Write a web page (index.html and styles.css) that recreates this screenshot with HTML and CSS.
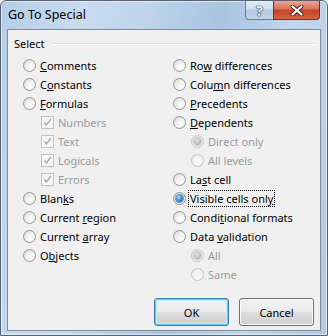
FILE: index.html
```html
<!DOCTYPE html>
<html lang="en">
<head>
  <meta charset="UTF-8">
  <title>Go To Special</title>
  <link rel="stylesheet" href="styles.css">
</head>
<body>
  <div class="window">
    <div class="titlebar">
      <span class="title">Go To Special</span>
      <div class="caption-buttons">
        <div class="cap-btn help">?</div>
        <div class="cap-btn close">
          <svg width="14" height="11" viewBox="0 0 14 11">
            <path d="M2.5 1.5 L11.5 9.5 M11.5 1.5 L2.5 9.5" stroke="#4a2018" stroke-width="4" stroke-linecap="round"/>
            <path d="M2.5 1.5 L11.5 9.5 M11.5 1.5 L2.5 9.5" stroke="#ffffff" stroke-width="2.2" stroke-linecap="round"/>
          </svg>
        </div>
      </div>
    </div>

    <div class="client">
      <div class="group-head">
        <span>Select</span>
        <div class="group-line"></div>
      </div>

      <div class="columns">
        <div class="col">
          <div class="opt"><span class="radio"></span><span><u>C</u>omments</span></div>
          <div class="opt"><span class="radio"></span><span>C<u>o</u>nstants</span></div>
          <div class="opt"><span class="radio"></span><span><u>F</u>ormulas</span></div>
          <div class="opt sub off"><span class="check"><svg width="11" height="11" viewBox="0 0 11 11"><path d="M2.5 5.5 L4.5 8 L8.8 2" fill="none" stroke="#a9a9a9" stroke-width="1.3"/></svg></span><span>Numbers</span></div>
          <div class="opt sub off"><span class="check"><svg width="11" height="11" viewBox="0 0 11 11"><path d="M2.5 5.5 L4.5 8 L8.8 2" fill="none" stroke="#a9a9a9" stroke-width="1.3"/></svg></span><span>Text</span></div>
          <div class="opt sub off"><span class="check"><svg width="11" height="11" viewBox="0 0 11 11"><path d="M2.5 5.5 L4.5 8 L8.8 2" fill="none" stroke="#a9a9a9" stroke-width="1.3"/></svg></span><span>Logicals</span></div>
          <div class="opt sub off"><span class="check"><svg width="11" height="11" viewBox="0 0 11 11"><path d="M2.5 5.5 L4.5 8 L8.8 2" fill="none" stroke="#a9a9a9" stroke-width="1.3"/></svg></span><span>Errors</span></div>
          <div class="opt"><span class="radio"></span><span>Blan<u>k</u>s</span></div>
          <div class="opt"><span class="radio"></span><span>Current <u>r</u>egion</span></div>
          <div class="opt"><span class="radio"></span><span>Current <u>a</u>rray</span></div>
          <div class="opt"><span class="radio"></span><span>O<u>b</u>jects</span></div>
        </div>
        <div class="col">
          <div class="opt"><span class="radio"></span><span>Ro<u>w</u> differences</span></div>
          <div class="opt"><span class="radio"></span><span>Colu<u>m</u>n differences</span></div>
          <div class="opt"><span class="radio"></span><span><u>P</u>recedents</span></div>
          <div class="opt"><span class="radio"></span><span><u>D</u>ependents</span></div>
          <div class="opt sub off"><span class="radio on"></span><span>Direct only</span></div>
          <div class="opt sub off"><span class="radio"></span><span>All levels</span></div>
          <div class="opt"><span class="radio"></span><span>La<u>s</u>t cell</span></div>
          <div class="opt"><span class="radio on"></span><span class="focus">Visible cells onl<u>y</u></span></div>
          <div class="opt"><span class="radio"></span><span>Condi<u>t</u>ional formats</span></div>
          <div class="opt"><span class="radio"></span><span>Data <u>v</u>alidation</span></div>
          <div class="opt sub off"><span class="radio on"></span><span>All</span></div>
          <div class="opt sub off"><span class="radio"></span><span>Same</span></div>
        </div>
      </div>

      <div class="actions">
        <button class="btn default">OK</button>
        <button class="btn">Cancel</button>
      </div>
    </div>
  </div>
</body>
</html>
```

FILE: styles.css
```css
body {
  margin: 0;
  background: #ffffff;
  font-family: "Noto Sans", sans-serif;
}
.window {
  width: 328px;
  height: 336px;
  box-sizing: border-box;
  border: 1px solid #56626f;
  border-radius: 6px 6px 0 0;
  padding: 0 6px 4px 6px;
  display: flex;
  flex-direction: column;
  background: linear-gradient(100deg, #b4cde7 0%, #cadcef 22%, #bcd3ea 40%, #a9c4e2 58%, #c2d7ed 78%, #b0cae5 100%);
  box-shadow: inset 0 0 0 1px rgba(255, 255, 255, 0.55);
}
.titlebar {
  height: 28px;
  display: flex;
  align-items: flex-start;
  padding: 0 1px 0 1px;
}
.title {
  font-size: 12.5px;
  line-height: 17px;
  margin-top: 5px;
  color: #000;
}
.caption-buttons {
  margin-left: auto;
  display: flex;
}
.cap-btn {
  height: 18px;
  display: flex;
  align-items: center;
  justify-content: center;
  border: 1px solid #6a7c91;
  border-top: none;
}
.help {
  width: 27px;
  border-right: none;
  border-radius: 0 0 0 4px;
  background: linear-gradient(#e6eef7 0%, #cfdeee 45%, #b3c8de 50%, #c3d6ea 100%);
  font-size: 14px;
  font-weight: bold;
  color: #eef2f6;
  text-shadow: 0 0 1px #2f3a46, 0 0 1px #2f3a46, 0 0 1px #2f3a46;
}
.close {
  width: 45px;
  border-color: #6b3028;
  border-radius: 0 0 4px 0;
  background: linear-gradient(#e9a897 0%, #d86f56 45%, #c8432b 50%, #d4633f 100%);
}
.client {
  flex: 1;
  border: 1px solid #7e8b98;
  background: #f0f0f0;
  display: flex;
  flex-direction: column;
  font-size: 11px;
  color: #000;
}
.group-head {
  display: flex;
  align-items: center;
  gap: 6px;
  padding: 6px 6px 0 6px;
  line-height: 15px;
  margin-bottom: 5px;
}
.group-line {
  flex: 1;
  height: 1px;
  background: #d5dfe5;
  border-bottom: 1px solid #ffffff;
}
.columns {
  display: grid;
  grid-template-columns: 150px 1fr;
  padding-left: 15px;
}
.col {
  display: flex;
  flex-direction: column;
}
.opt {
  height: 19px;
  display: flex;
  align-items: center;
  gap: 4px;
  line-height: 15px;
}
.opt.sub {
  padding-left: 18px;
}
.opt.off {
  color: #9b9b9b;
}
.radio {
  width: 13px;
  height: 13px;
  box-sizing: border-box;
  border-radius: 50%;
  border: 1px solid #979797;
  background: radial-gradient(circle at 62% 66%, #fdfdfd 0%, #f0f0f0 45%, #d2d2d2 100%);
  display: flex;
  align-items: center;
  justify-content: center;
}
.radio.on::after {
  content: "";
  width: 7px;
  height: 7px;
  border-radius: 50%;
  background: radial-gradient(circle at 40% 35%, #b4e2ff 0%, #3d8fdc 45%, #134e9c 100%);
  box-shadow: 0 0 0 1px #6e93bd;
}
.off .radio {
  border-color: #c5c5c5;
  background: radial-gradient(circle at 62% 66%, #fafafa 0%, #f2f2f2 50%, #e2e2e2 100%);
}
.off .radio.on::after {
  background: radial-gradient(circle at 40% 35%, #e6e6e6 0%, #bdbdbd 60%, #a8a8a8 100%);
  box-shadow: 0 0 0 1px #c8c8c8;
}
.check {
  width: 13px;
  height: 13px;
  box-sizing: border-box;
  border: 1px solid #c2c2c2;
  background: #f6f6f6;
  display: flex;
}
.focus {
  outline: 1px dotted #000;
  outline-offset: 0;
  padding: 0 1px;
  margin-left: -1px;
}
.actions {
  margin-top: auto;
  display: flex;
  justify-content: flex-end;
  gap: 10px;
  padding: 0 6px 4px 6px;
}
.btn {
  width: 75px;
  height: 28px;
  font-family: "Noto Sans", sans-serif;
  font-size: 11px;
  color: #000;
  border: 1px solid #707070;
  border-radius: 3px;
  background: linear-gradient(#f2f2f2 0%, #ebebeb 48%, #dddddd 52%, #cfcfcf 100%);
  box-shadow: inset 0 0 0 1px #fcfcfc;
  padding: 0;
}
.btn.default {
  border-color: #3c7fb1;
  box-shadow: inset 0 0 0 1px #48d4f7, inset 0 0 0 2px #c8eefb;
}
```
